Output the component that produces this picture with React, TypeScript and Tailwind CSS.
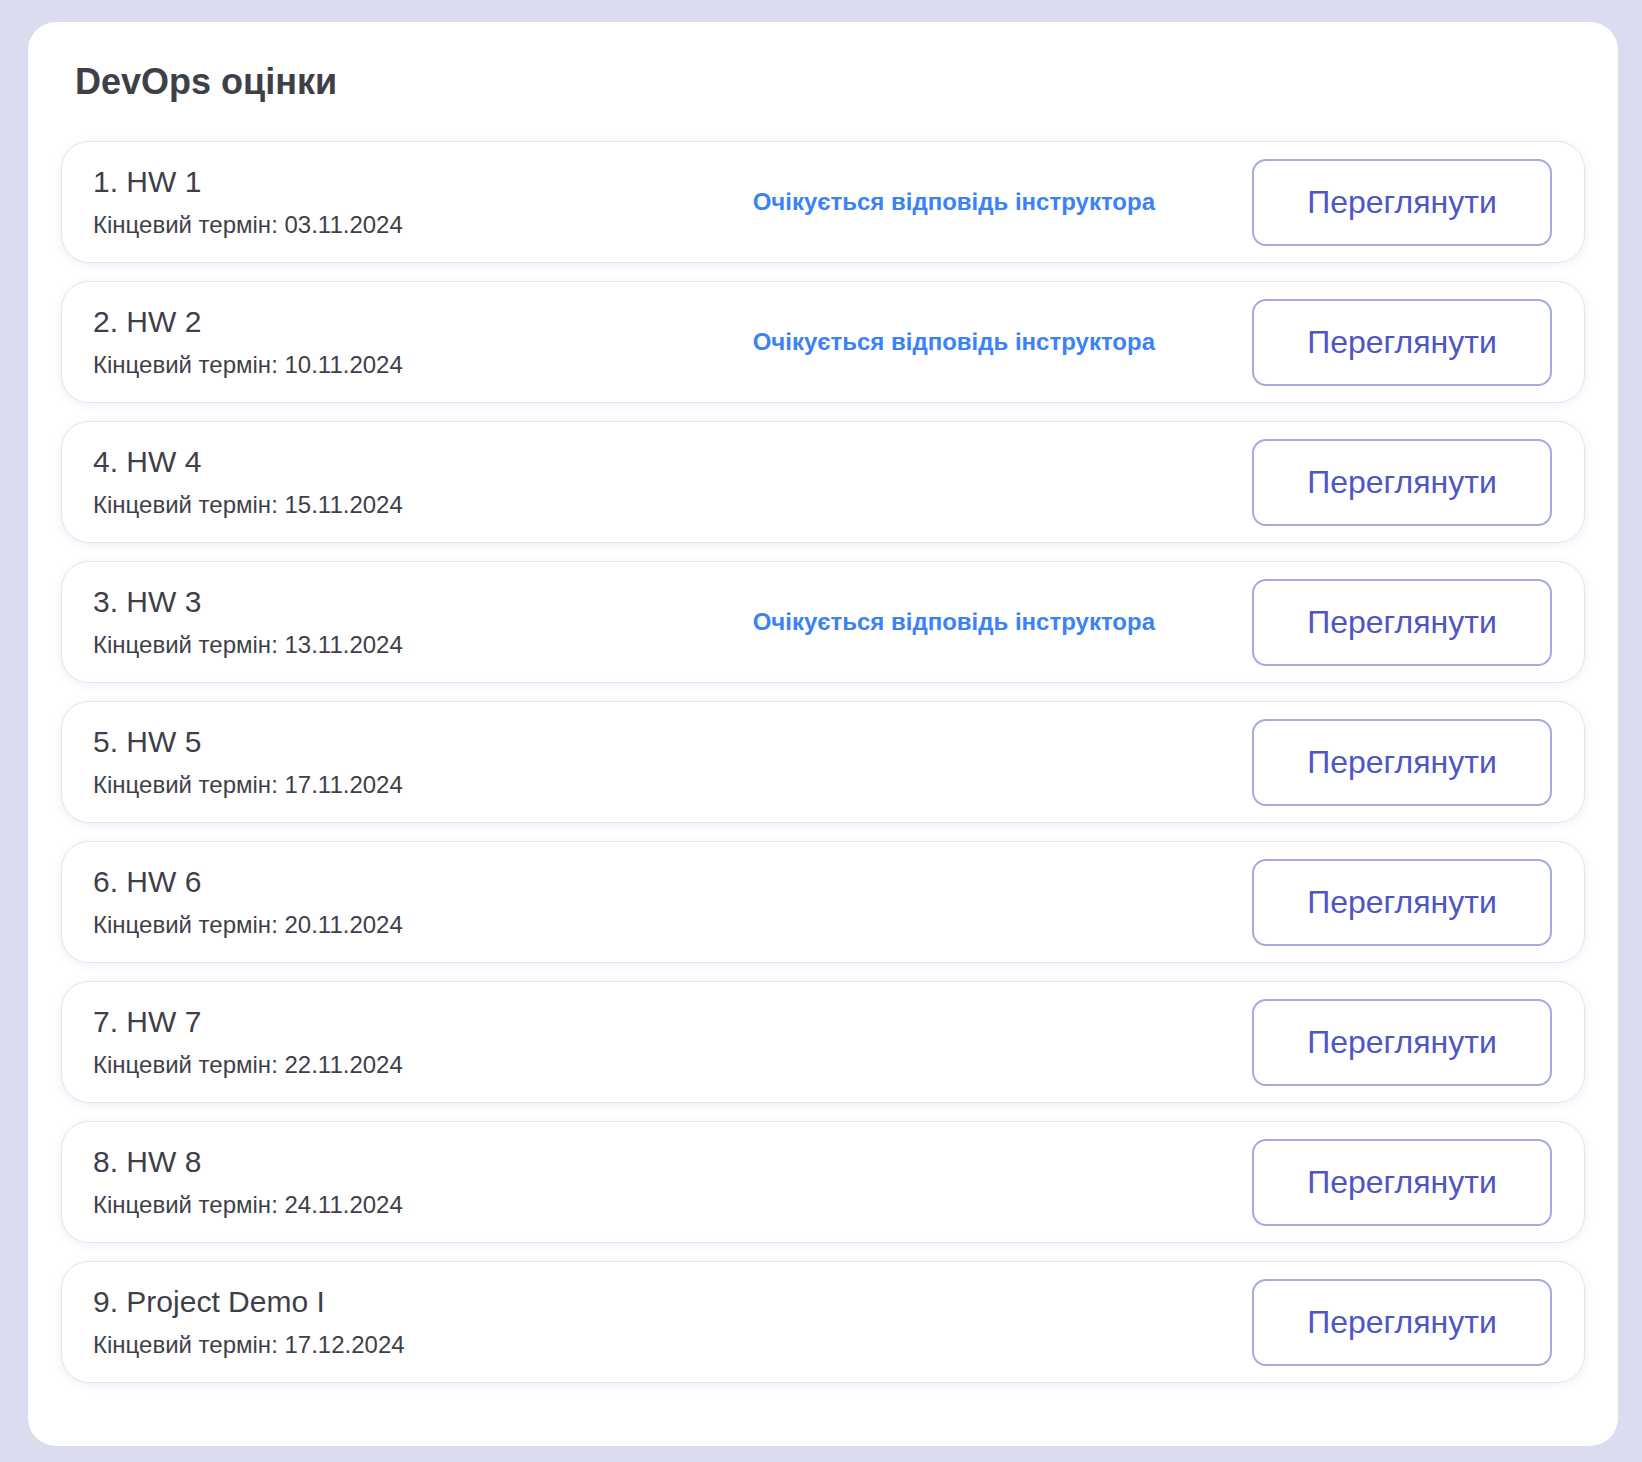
const items = [
	{ n: 1, title: "HW 1", due: "03.11.2024", pending: true },
	{ n: 2, title: "HW 2", due: "10.11.2024", pending: true },
	{ n: 4, title: "HW 4", due: "15.11.2024", pending: false },
	{ n: 3, title: "HW 3", due: "13.11.2024", pending: true },
	{ n: 5, title: "HW 5", due: "17.11.2024", pending: false },
	{ n: 6, title: "HW 6", due: "20.11.2024", pending: false },
	{ n: 7, title: "HW 7", due: "22.11.2024", pending: false },
	{ n: 8, title: "HW 8", due: "24.11.2024", pending: false },
	{ n: 9, title: "Project Demo I", due: "17.12.2024", pending: false },
];

function GradeRow({
	n,
	title,
	due,
	pending,
}: {
	n: number;
	title: string;
	due: string;
	pending: boolean;
}) {
	return (
		<div className="flex h-[122px] items-center rounded-[28px] border border-[#e3e3f5] bg-white pl-[31px] pr-[32px] shadow-[0_2px_8px_rgba(120,120,200,0.12)]">
			<div className="flex-1 text-[#3f3f4a]">
				<div className="text-[30px] leading-[36px]">
					{n}. {title}
				</div>
				<div className="mt-[9px] text-[24px] leading-[32px]">
					Кінцевий термін: {due}
				</div>
			</div>
			{pending && (
				<span className="mr-[97px] text-[24px] font-bold text-[#3b82f6]">
					Очікується відповідь інструктора
				</span>
			)}
			<button className="h-[87px] w-[300px] rounded-[14px] border-2 border-[#a6aae3] bg-white text-[32px] text-[#4e55c6]">
				Переглянути
			</button>
		</div>
	);
}

export default function App() {
	return (
		<div className="min-h-[1462px] bg-[#dcdcf1] pb-[16px] pl-[28px] pr-[24px] pt-[22px] font-['Liberation_Sans',Arial,sans-serif]">
			<div className="rounded-[28px] bg-white px-[33px] pb-[63px] pt-[40px]">
				<h2 className="px-[14px] text-[36px] font-bold leading-[40px] text-[#3f3f4a]">
					DevOps оцінки
				</h2>
				<div className="mt-[39px] flex flex-col gap-[18px]">
					{items.map((it) => (
						<GradeRow key={it.n} {...it} />
					))}
				</div>
			</div>
		</div>
	);
}
